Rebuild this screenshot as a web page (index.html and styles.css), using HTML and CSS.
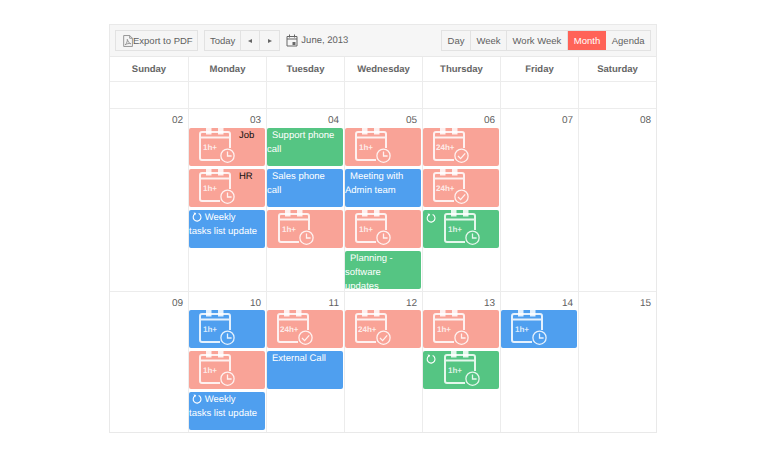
FILE: index.html
```html
<!DOCTYPE html>
<html lang="en">
<head>
<meta charset="utf-8">
<title>Scheduler - June, 2013</title>
<link rel="stylesheet" href="styles.css">
</head>
<body>
<svg class="defs" aria-hidden="true">
  <symbol id="cal" viewBox="0 0 36 36">
    <path class="line" d="M21 32H3a2 2 0 0 1-2-2V6a2 2 0 0 1 2-2H29a2 2 0 0 1 2 2V20M1 9.5H31"/>
    <rect class="solid" x="7" y="0" width="5.500" height="6.500"/>
    <rect class="solid" x="19" y="0" width="5.500" height="6.500"/>
  </symbol>
  <symbol id="clock" viewBox="0 0 36 36">
    <circle class="thin" cx="28.500" cy="27.700" r="6.600"/>
    <path class="thin" d="M28.500 23.600V28H32.600"/>
  </symbol>
  <symbol id="check" viewBox="0 0 36 36">
    <circle class="thin" cx="28.500" cy="27.700" r="6.600"/>
    <path class="thin" d="M25 28l2.600 2.600 4.600-5.200"/>
  </symbol>
  <symbol id="repeat" viewBox="0 0 10 10">
    <path class="rep" d="M3 1.900A3.900 3.900 0 1 0 6.600 1.600"/>
    <path class="rep-head" d="M1.600 0.400L4.200 0.900 3 3.600Z"/>
  </symbol>
</svg>

<main class="scheduler">
  <div class="toolbar">
    <button class="btn solo">
      <svg class="pdf" viewBox="0 0 10 11"><path d="M1.500.5H7L9.500 3V10.500H1.500ZM7 .5V3H9.500M2.800 9C4.500 7.500 5 5.500 4.800 4 5.500 6 6.500 7.500 8 8 6 7.500 4.500 8 2.800 9Z"/></svg>Export to PDF
    </button>
    <div class="group">
      <button class="btn tight">Today</button>
      <button class="btn nav"><span class="tri left"></span></button>
      <button class="btn nav"><span class="tri right"></span></button>
    </div>
    <div class="range">
      <svg class="date-ico" viewBox="0 0 12 13"><path d="M1 2.500H11V12H1ZM1 5H11M3.500 .5V3.500M8.500 .5V3.500"/><rect x="6.500" y="8" width="3" height="3"/></svg>
      <span>June, 2013</span>
    </div>
    <div class="group views">
      <button class="btn">Day</button>
      <button class="btn">Week</button>
      <button class="btn">Work Week</button>
      <button class="btn active">Month</button>
      <button class="btn">Agenda</button>
    </div>
  </div>

  <div class="grid head">
    <div class="dow">Sunday</div><div class="dow">Monday</div><div class="dow">Tuesday</div><div class="dow">Wednesday</div><div class="dow">Thursday</div><div class="dow">Friday</div><div class="dow">Saturday</div>
  </div>
  <div class="grid blank">
    <div></div><div></div><div></div><div></div><div></div><div></div><div></div>
  </div>

  <div class="grid week one">
    <div class="day"><div class="num">02</div></div>
    <div class="day"><div class="num">03</div>
      <div class="ev red"><svg class="ico"><use href="#cal"/><use href="#clock"/><text x="4" y="22">1h+</text></svg><span class="dark">Job</span></div>
      <div class="ev red"><svg class="ico"><use href="#cal"/><use href="#clock"/><text x="4" y="22">1h+</text></svg><span class="dark">HR</span></div>
      <div class="ev blue txt"><svg class="rep-ico"><use href="#repeat"/></svg> Weekly<br>tasks list update</div>
    </div>
    <div class="day"><div class="num">04</div>
      <div class="ev green txt ind">Support phone<br>call</div>
      <div class="ev blue txt ind">Sales phone<br>call</div>
      <div class="ev red"><svg class="ico wide"><use href="#cal"/><use href="#clock"/><text x="4" y="22">1h+</text></svg></div>
    </div>
    <div class="day"><div class="num">05</div>
      <div class="ev red"><svg class="ico"><use href="#cal"/><use href="#clock"/><text x="4" y="22">1h+</text></svg></div>
      <div class="ev blue txt ind">Meeting with<br>Admin team</div>
      <div class="ev red"><svg class="ico"><use href="#cal"/><use href="#clock"/><text x="4" y="22">1h+</text></svg></div>
      <div class="ev green txt ind">Planning -<br>software<br>updates</div>
    </div>
    <div class="day"><div class="num">06</div>
      <div class="ev red"><svg class="ico"><use href="#cal"/><use href="#check"/><text x="3" y="22">24h+</text></svg></div>
      <div class="ev red"><svg class="ico"><use href="#cal"/><use href="#check"/><text x="3" y="22">24h+</text></svg></div>
      <div class="ev green"><svg class="rep-ico top"><use href="#repeat"/></svg><svg class="ico rec"><use href="#cal"/><use href="#clock"/><text x="4" y="22">1h+</text></svg></div>
    </div>
    <div class="day"><div class="num">07</div></div>
    <div class="day"><div class="num">08</div></div>
  </div>

  <div class="grid week two">
    <div class="day"><div class="num">09</div></div>
    <div class="day"><div class="num">10</div>
      <div class="ev blue"><svg class="ico"><use href="#cal"/><use href="#clock"/><text x="4" y="22">1h+</text></svg></div>
      <div class="ev red"><svg class="ico"><use href="#cal"/><use href="#clock"/><text x="4" y="22">1h+</text></svg></div>
      <div class="ev blue txt"><svg class="rep-ico"><use href="#repeat"/></svg> Weekly<br>tasks list update</div>
    </div>
    <div class="day"><div class="num">11</div>
      <div class="ev red"><svg class="ico"><use href="#cal"/><use href="#check"/><text x="3" y="22">24h+</text></svg></div>
      <div class="ev blue txt ind">External Call</div>
    </div>
    <div class="day"><div class="num">12</div>
      <div class="ev red"><svg class="ico"><use href="#cal"/><use href="#check"/><text x="3" y="22">24h+</text></svg></div>
    </div>
    <div class="day"><div class="num">13</div>
      <div class="ev red"><svg class="ico"><use href="#cal"/><use href="#clock"/><text x="4" y="22">1h+</text></svg></div>
      <div class="ev green"><svg class="rep-ico top"><use href="#repeat"/></svg><svg class="ico rec"><use href="#cal"/><use href="#clock"/><text x="4" y="22">1h+</text></svg></div>
    </div>
    <div class="day"><div class="num">14</div>
      <div class="ev blue"><svg class="ico"><use href="#cal"/><use href="#clock"/><text x="4" y="22">1h+</text></svg></div>
    </div>
    <div class="day"><div class="num">15</div></div>
  </div>
</main>
</body>
</html>
```

FILE: styles.css
```css
* { box-sizing: border-box; }

html, body { margin: 0; background: #fff; }

body {
  padding: 24px 0 0 109px;
  font-family: "Liberation Sans", Arial, sans-serif;
  font-size: 9.5px;
  color: #5f5f5f;
  text-rendering: geometricPrecision;
}

.defs { display: none; }

.scheduler {
  width: 548px;
  border: 1px solid #e9e9e9;
}

/* toolbar */
.toolbar {
  display: flex;
  align-items: center;
  height: 32px;
  padding: 0 5px;
  gap: 6px;
  background: #f6f6f6;
  border-bottom: 1px solid #e9e9e9;
}

.btn {
  display: flex;
  align-items: center;
  height: 21px;
  padding: 0 5.5px;
  font: inherit;
  color: #5f5f5f;
  background: #f5f5f5;
  border: 0;
  border-right: 1px solid #e2e2e2;
}

.btn:last-child { border-right: 0; }

.btn.tight { padding: 0 5px; }

.solo {
  width: 83px;
  padding: 0 6px;
  border: 1px solid #e2e2e2;
  white-space: nowrap;
}

.group {
  display: flex;
  border: 1px solid #e2e2e2;
  height: 21px;
}

.group .btn { height: 19px; }

.nav {
  width: 19px;
  justify-content: center;
  padding: 0;
}

.tri {
  width: 0;
  height: 0;
  border-top: 2.5px solid transparent;
  border-bottom: 2.5px solid transparent;
}

.tri.left { border-right: 4px solid #666; }
.tri.right { border-left: 4px solid #666; }

.pdf {
  width: 11px;
  height: 12px;
  flex: none;
  fill: none;
  stroke: #8a8a8a;
  stroke-width: .8;
}

.range {
  display: flex;
  align-items: center;
  gap: 3px;
}

.date-ico {
  width: 12px;
  height: 13px;
  fill: none;
  stroke: #666;
  stroke-width: 1;
}

.date-ico rect { fill: #666; stroke: none; }

.views { margin-left: auto; }

.btn.active {
  padding: 0 6px;
  background: #ff6358;
  color: #fff;
  border-right: 0;
}

/* grid */
.grid {
  display: grid;
  grid-template-columns: repeat(7, 1fr);
}

.grid > div + div { border-left: 1px solid #ececec; }

.head { height: 25px; border-bottom: 1px solid #ececec; }

.dow {
  display: flex;
  align-items: center;
  justify-content: center;
  padding-top: 1px;
  font-weight: bold;
  color: #666;
}

.blank { height: 27px; border-bottom: 1px solid #ececec; }

.week.one { height: 183px; border-bottom: 1px solid #ececec; }
.week.two { height: 140px; }

.day {
  display: flex;
  flex-direction: column;
  gap: 3px;
  min-width: 0;
}

.num {
  height: 16px;
  padding: 6px 5px 0 0;
  line-height: 12px;
  font-size: 10px;
  text-align: right;
  color: #5f5f5f;
}

.two .num { height: 15px; }

/* events */
.ev {
  flex: none;
  display: flex;
  height: 38px;
  margin-right: 1px;
  overflow: hidden;
  border-radius: 2px;
  line-height: 14px;
  color: #fff;
}

.red { background: #f9a397; }
.blue { background: #4f9fef; }
.green { background: #55c583; }

.txt { display: block; padding-top: 1px; }
.ind { text-indent: 5px; }

.dark {
  padding: 1px 0 0 4px;
  color: #111;
}

.ico {
  flex: none;
  width: 36px;
  height: 36px;
  margin-left: 10px;
}

.ico.wide { margin-left: 11px; }
.ico.rec { margin-left: 8px; }

.ico text {
  font-size: 8px;
  font-weight: bold;
  fill: #fff;
  fill-opacity: .8;
}

.line {
  fill: none;
  stroke: #fff;
  stroke-opacity: .85;
  stroke-width: 2;
}

.solid { fill: #fff; fill-opacity: .85; }

.thin {
  fill: none;
  stroke: #fff;
  stroke-opacity: .85;
  stroke-width: 1.300;
}

.rep-ico {
  width: 10px;
  height: 10px;
  margin-left: 3px;
  vertical-align: -2px;
}

.rep-ico.top {
  flex: none;
  margin: 3px 0 0 3px;
}

.rep { fill: none; stroke: #fff; stroke-width: 1.100; }
.rep-head { fill: #fff; }
```
